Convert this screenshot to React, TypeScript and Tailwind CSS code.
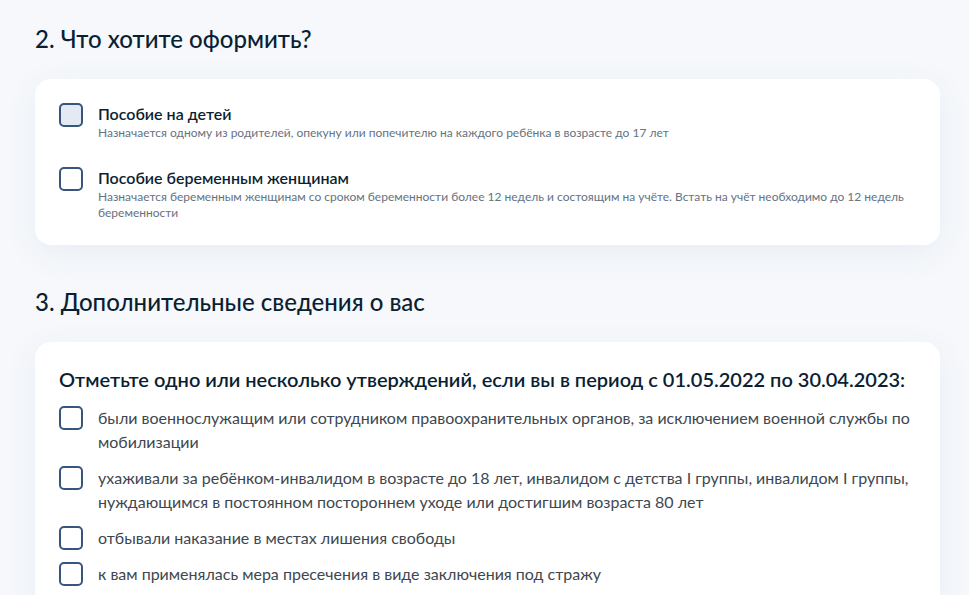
import React from "react";

const Box = ({ hover = false }: { hover?: boolean }) => (
  <span
    className={
      "mt-0 block h-6 w-6 shrink-0 rounded-[5px] border-2 border-[#36567f] " +
      (hover ? "bg-[#e3eaf4]" : "bg-white")
    }
  />
);

const items = [
  "были военнослужащим или сотрудником правоохранительных органов, за исключением военной службы по мобилизации",
  "ухаживали за ребёнком-инвалидом в возрасте до 18 лет, инвалидом с детства I группы, инвалидом I группы, нуждающимся в постоянном постороннем уходе или достигшим возраста 80 лет",
  "отбывали наказание в местах лишения свободы",
  "к вам применялась мера пресечения в виде заключения под стражу",
];

export default function App() {
  return (
    <div
      className="min-h-[595px] w-full overflow-hidden bg-[#f6f8fb] pl-[35px] pr-[29px] pt-[23px] text-[#0b1f33]"
      style={{ fontFamily: "Lato, 'Noto Sans', sans-serif" }}
    >
      <h2 className="text-[24px] font-medium leading-[32px]">2. Что хотите оформить?</h2>
      <div className="mt-6 flex flex-col gap-[26px] rounded-2xl bg-white px-6 py-6 shadow-[0_8px_32px_rgba(80,110,160,0.08)]">
        <label className="flex gap-[15px]">
          <Box hover />
          <div>
            <div className="text-[16px] font-semibold leading-[22px]">Пособие на детей</div>
            <div className="text-[12px] leading-4 text-[#66727f]">
              Назначается одному из родителей, опекуну или попечителю на каждого ребёнка в возрасте до 17 лет
            </div>
          </div>
        </label>
        <label className="flex gap-[15px]">
          <Box />
          <div>
            <div className="text-[16px] font-semibold leading-[22px]">Пособие беременным женщинам</div>
            <div className="text-[12px] leading-4 text-[#66727f]">
              Назначается беременным женщинам со сроком беременности более 12 недель и состоящим на учёте. Встать на учёт необходимо до 12 недель беременности
            </div>
          </div>
        </label>
      </div>

      <h2 className="mt-[41px] text-[24px] font-medium leading-[32px]">3. Дополнительные сведения о вас</h2>
      <div className="mt-6 rounded-2xl bg-white px-6 pb-6 pt-6 shadow-[0_8px_32px_rgba(80,110,160,0.08)]">
        <div className="text-[20px] font-semibold leading-[26px]">
          Отметьте одно или несколько утверждений, если вы в период с 01.05.2022 по 30.04.2023:
        </div>
        <div className="mt-[14px] flex flex-col gap-3">
          {items.map((t) => (
            <label key={t} className="flex gap-[15px]">
              <Box />
              <span className="text-[16px] leading-6 text-[#3e4750]">{t}</span>
            </label>
          ))}
        </div>
      </div>
    </div>
  );
}
